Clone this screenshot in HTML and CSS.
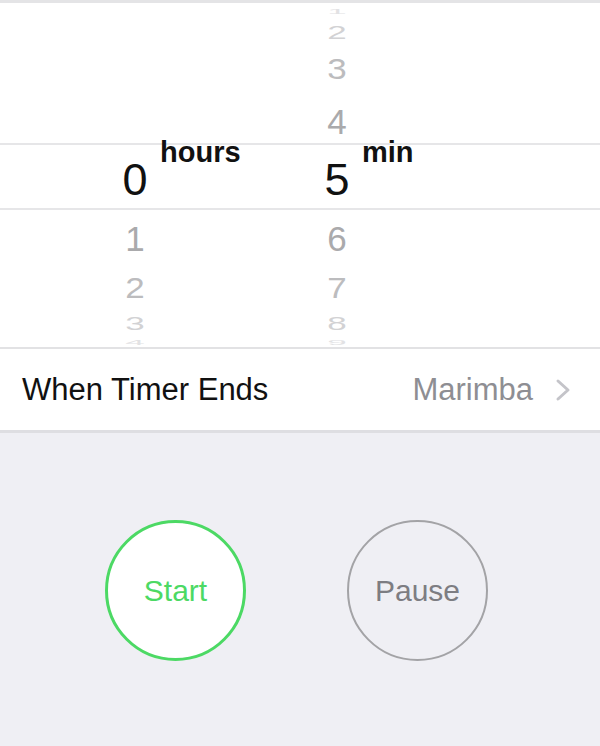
FILE: index.html
```html
<!DOCTYPE html>
<html lang="en">
<head>
  <meta charset="UTF-8" />
  <meta name="viewport" content="width=device-width, initial-scale=1.0" />
  <title>Timer</title>
  <link rel="stylesheet" href="styles.css">
</head>
<body>
  <div class="picker">
    <div class="row r-edge-top">
      <span></span><span class="num"></span><span></span><span class="num"><b class="d far2">1</b></span>
    </div>
    <div class="row r-far-top">
      <span></span><span class="num"></span><span></span><span class="num"><b class="d far">2</b></span>
    </div>
    <div class="row r-mid-top">
      <span></span><span class="num"></span><span></span><span class="num"><b class="d mid">3</b></span>
    </div>
    <div class="row r-near-top">
      <span></span><span class="num"></span><span></span><span class="num"><b class="d near">4</b></span>
    </div>
    <div class="row selected">
      <span></span>
      <span class="num"><b class="d sel">0</b></span>
      <span class="unit">hours</span>
      <span class="num"><b class="d sel">5</b></span>
      <span class="unit">min</span>
    </div>
    <div class="row r-near-bot">
      <span></span><span class="num"><b class="d near">1</b></span><span></span><span class="num"><b class="d near">6</b></span>
    </div>
    <div class="row r-mid-bot">
      <span></span><span class="num"><b class="d mid">2</b></span><span></span><span class="num"><b class="d mid">7</b></span>
    </div>
    <div class="row r-far-bot">
      <span></span><span class="num"><b class="d far">3</b></span><span></span><span class="num"><b class="d far">8</b></span>
    </div>
    <div class="row r-edge-bot">
      <span></span><span class="num"><b class="d far2">4</b></span><span></span><span class="num"><b class="d far2">9</b></span>
    </div>
  </div>

  <div class="setting">
    <span class="label">When Timer Ends</span>
    <span class="value">Marimba</span>
    <svg class="chevron" width="16" height="24" viewBox="0 0 16 24">
      <path d="M3 3 L13 12 L3 21" fill="none" stroke="#c4c4c9" stroke-width="3" stroke-linecap="round" stroke-linejoin="round"/>
    </svg>
  </div>

  <div class="actions">
    <button class="circle start">Start</button>
    <button class="circle pause">Pause</button>
  </div>
</body>
</html>
```

FILE: styles.css
```css
body {
  margin: 0;
  background: #efeff4;
  font-family: "Liberation Sans", Arial, sans-serif;
  width: 600px;
  height: 746px;
  overflow: hidden;
}

.picker {
  background: #fff;
  border-top: 3px solid #e4e4e6;
  border-bottom: 2px solid #e2e2e4;
}

.row {
  display: grid;
  grid-template-columns: 110px 50px 152px 50px 1fr;
}

.num {
  text-align: center;
}

.d {
  display: inline-block;
  font-weight: normal;
  font-size: 35px;
  line-height: inherit;
}

.r-edge-top { height: 18px; line-height: 18px; }
.r-far-top { height: 22px; line-height: 22px; }
.r-mid-top { height: 52px; line-height: 52px; }
.r-near-top { height: 42px; line-height: 42px; padding-top: 6px; }

.selected {
  height: 57px;
  line-height: 57px;
  padding-top: 6px;
  border-top: 2px solid #e6e6e8;
  border-bottom: 2px solid #e6e6e8;
}

.r-near-bot { height: 58px; line-height: 58px; }
.r-mid-bot { height: 40px; line-height: 40px; }
.r-far-bot { height: 30px; line-height: 30px; }
.r-edge-bot { height: 9px; line-height: 9px; overflow: hidden; }

.d.sel {
  font-size: 45px;
  color: #111;
}

.d.near {
  color: #aaaaac;
}

.d.mid {
  color: #bcbcbe;
  transform: scaleY(0.82);
}

.d.far {
  color: #d2d2d4;
  transform: scaleY(0.55);
}

.d.far2 {
  color: #e2e2e4;
  transform: scaleY(0.18);
}

.unit {
  font-size: 29px;
  font-weight: bold;
  line-height: 29px;
  margin-top: -13px;
  color: #111;
}

.setting {
  display: flex;
  align-items: center;
  height: 81px;
  padding: 0 29px 0 22px;
  background: #fff;
  border-bottom: 3px solid #dedee2;
}

.label {
  flex: 1;
  font-size: 31px;
  color: #111;
}

.value {
  font-size: 31px;
  color: #8e8e93;
  margin-right: 22px;
}

.chevron {
  display: block;
}

.actions {
  display: flex;
  gap: 101px;
  padding: 87px 0 0 105px;
}

.circle {
  width: 141px;
  height: 141px;
  border-radius: 50%;
  font-family: "Liberation Sans", Arial, sans-serif;
  font-size: 30px;
  padding: 0;
}

.start {
  background: #fff;
  border: 3px solid #4cd964;
  color: #4cd964;
}

.pause {
  background: transparent;
  border: 2px solid #a3a3a6;
  color: #7d7d82;
}
```
